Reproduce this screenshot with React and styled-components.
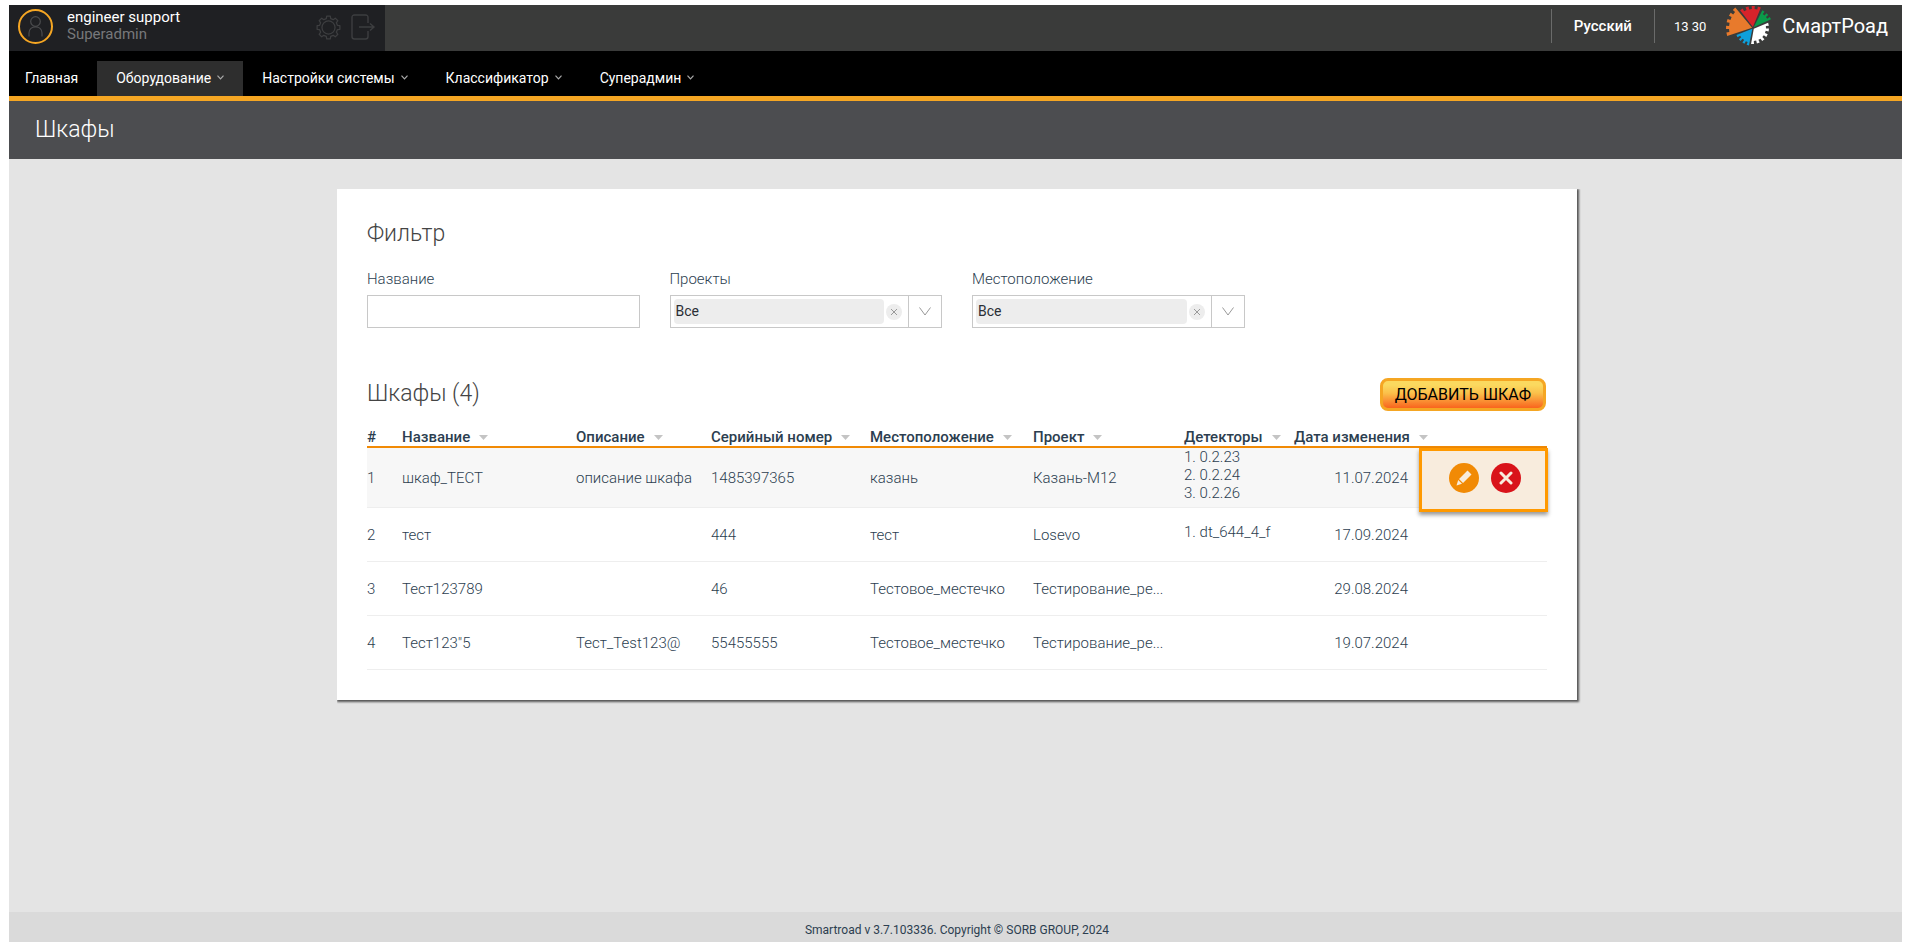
import React, { useState } from 'react';
import styled, { createGlobalStyle, css } from 'styled-components';

const GlobalStyle = createGlobalStyle`
  * {
    box-sizing: border-box;
  }
  body {
    margin: 0;
    background: #fff;
    color: #2c3e50;
    font-family: Roboto, 'Liberation Sans', sans-serif;
    font-size: 15px;
    font-weight: 300;
  }
  button, input, select {
    font-family: inherit;
  }
`;

const Page = styled.div`
  display: flex;
  flex-direction: column;
  min-height: calc(100vh - 11px);
  margin: 5px 9px 6px;
  background: #e4e4e4;
`;

const TopBar = styled.header`
  display: flex;
  justify-content: space-between;
  height: 46px;
  background: #3a3b3a;
`;

const UserPanel = styled.div`
  display: flex;
  align-items: center;
  width: 376px;
  padding: 0 9px 4px 9px;
  background: #1f2023;
`;

const Avatar = styled.span`
  display: flex;
  align-items: flex-end;
  justify-content: center;
  width: 35px;
  height: 35px;
  border: 2px solid #f5a623;
  border-radius: 50%;
  padding-bottom: 5px;
`;

const UserText = styled.div`
  flex: 1;
  margin-left: 14px;
  font-size: 15px;
  font-weight: 400;
  line-height: 17px;
`;

const UserName = styled.div`
  color: #fff;
`;

const UserRole = styled.div`
  color: #77787a;
`;

const IconButton = styled.button`
  display: flex;
  margin: 2px 0 0 10px;
  padding: 0;
  border: 0;
  background: none;
  color: #3d3e40;
  cursor: pointer;
`;

const TopRight = styled.div`
  display: flex;
  align-items: center;
  padding-right: 14px;
  color: #fff;
  font-weight: 400;
`;

const Language = styled.button`
  height: 34px;
  margin-bottom: 4px;
  padding: 0 22px;
  border: 0;
  border-left: 1px solid #6a6b6a;
  border-right: 1px solid #6a6b6a;
  background: none;
  color: #fff;
  font-size: 15px;
  font-weight: 500;
  cursor: pointer;
`;

const Clock = styled.span`
  margin: 0 19px 4px;
  font-size: 13px;
`;

const Brand = styled.a`
  display: flex;
  align-items: center;
  gap: 11px;
  padding-bottom: 4px;
  color: #fff;
  font-size: 20px;
  text-decoration: none;
`;

const Nav = styled.nav`
  display: flex;
  align-items: flex-end;
  height: 50px;
  border-bottom: 5px solid #f5a623;
  background: #000;
`;

const NavLink = styled.a`
  display: flex;
  align-items: center;
  gap: 6px;
  height: 35px;
  padding: 0 19px 2px;
  background: ${(p) => (p.$active ? '#2e2e2e' : 'transparent')};
  color: #fff;
  font-size: 14px;
  font-weight: 400;
  text-decoration: none;

  &:first-child {
    padding-left: 16px;
  }
`;

const TitleBar = styled.div`
  height: 58px;
  padding-left: 26px;
  background: #4c4d50;
`;

const PageTitle = styled.h1`
  margin: 0;
  color: #fff;
  font-size: 23px;
  font-weight: 300;
  line-height: 58px;
`;

const Main = styled.main`
  flex: 1;
  padding: 30px 0 30px 3px;
`;

const Card = styled.section`
  max-width: 1240px;
  margin: 0 auto;
  padding: 30px;
  background: #fff;
  box-shadow: 1px 1px 2px 1px #555;
  clip-path: inset(0 -4px -4px 0);
`;

const Heading = styled.h2`
  margin: 0;
  color: #444;
  font-size: 23px;
  font-weight: 300;
  line-height: 30px;
`;

const Filters = styled.form`
  display: grid;
  grid-template-columns: repeat(4, 1fr);
  gap: 30px;
  margin: 20px 0 48px;
`;

const Field = styled.div`
  display: flex;
  flex-direction: column;
`;

const Label = styled.label`
  margin-bottom: 6px;
  line-height: 20px;
`;

const boxed = css`
  height: 33px;
  border: 1px solid #c8c8c8;
  background: #fff;
`;

const TextInput = styled.input`
  ${boxed}
  padding: 0 8px;
  font-size: 14px;
`;

const SelectBox = styled.div`
  ${boxed}
  display: flex;
  align-items: center;
  padding-left: 3px;
`;

const Select = styled.select`
  appearance: none;
  flex: 1;
  min-width: 0;
  height: 25px;
  padding: 0 2px 2px;
  border: 0;
  border-radius: 4px;
  background: #ededed;
  color: #2b2f36;
  font-size: 14px;
  font-weight: 400;
`;

const ClearButton = styled.button`
  display: flex;
  align-items: center;
  justify-content: center;
  width: 16px;
  height: 16px;
  margin: 0 6px 0 2px;
  padding: 0;
  border: 0;
  border-radius: 50%;
  background: #ededed;
  cursor: pointer;
`;

const OpenButton = styled.button`
  display: flex;
  align-items: center;
  justify-content: center;
  align-self: stretch;
  width: 33px;
  padding: 0;
  border: 0;
  border-left: 1px solid #c8c8c8;
  background: #fff;
`;

const ListHead = styled.div`
  display: flex;
  align-items: center;
  justify-content: space-between;
  height: 36px;
  padding-right: 1px;
`;

const AddButton = styled.button`
  height: 33px;
  padding: 0 12px;
  border: 3px solid #f5a623;
  border-radius: 8px;
  background: linear-gradient(#fbd95f 15%, #fbc04a 45%, #f9641e);
  color: #000;
  font-size: 16px;
  font-weight: 400;
  text-transform: uppercase;
  cursor: pointer;
`;

const Table = styled.table`
  width: 100%;
  margin-top: 15px;
  border-collapse: separate;
  border-spacing: 0;
  table-layout: fixed;
`;

const Th = styled.th`
  height: 21px;
  width: ${(p) => p.$width};
  padding: 0;
  border-bottom: 2px solid #f18a05;
  font-size: 15px;
  font-weight: 500;
  line-height: 18px;
  text-align: left;
  white-space: nowrap;
`;

const SortIcon = styled.svg`
  margin-left: 9px;
  vertical-align: 2px;
`;

const Tr = styled.tr`
  background: ${(p) => (p.$active ? '#f7f7f7' : '#fff')};
`;

const Td = styled.td`
  position: relative;
  height: 54px;
  padding: 0 12px 0 0;
  border-bottom: 1px solid #eee;
  line-height: 18px;
  overflow: ${(p) => (p.$cut ? 'hidden' : 'visible')};
  text-overflow: ellipsis;
  text-align: ${(p) => (p.$right ? 'right' : 'left')};
  white-space: nowrap;
`;

const Detectors = styled.div`
  padding-bottom: 5px;
`;

const Highlight = styled.div`
  position: absolute;
  top: 0;
  right: -1px;
  bottom: -5px;
  left: -1px;
  z-index: 1;
  display: flex;
  align-items: center;
  justify-content: center;
  gap: 12px;
  padding: 0 0 4px 3px;
  border: 3px solid #ff9900;
  background: #f8ecdd;
  box-shadow: 0 3px 4px rgba(0, 0, 0, 0.4);
`;

const RoundButton = styled.button`
  display: flex;
  align-items: center;
  justify-content: center;
  width: 30px;
  height: 30px;
  padding: 0;
  border: 0;
  border-radius: 50%;
  background: ${(p) => p.$color};
  cursor: pointer;
`;

const Footer = styled.footer`
  height: 30px;
  padding: 3px 0 0 3px;
  background: #dadada;
  font-size: 12px;
  font-weight: 400;
  line-height: 30px;
  text-align: center;
`;

const menu = [
  { title: 'Главная' },
  { title: 'Оборудование', sub: true, active: true },
  { title: 'Настройки системы', sub: true },
  { title: 'Классификатор', sub: true },
  { title: 'Суперадмин', sub: true },
];

const columns = [
  { title: '#', width: '35px' },
  { title: 'Название', width: '174px', sort: true },
  { title: 'Описание', width: '135px', sort: true },
  { title: 'Серийный номер', width: '159px', sort: true },
  { title: 'Местоположение', width: '163px', sort: true },
  { title: 'Проект', width: '151px', sort: true },
  { title: 'Детекторы', width: '110px', sort: true },
  { title: 'Дата изменения', width: '126px', sort: true },
  { title: '', width: 'auto' },
];

const cabinets = [
  { name: 'шкаф_ТЕСТ', about: 'описание шкафа', serial: '1485397365', place: 'казань', project: 'Казань-М12', detectors: ['0.2.23', '0.2.24', '0.2.26'], date: '11.07.2024', active: true },
  { name: 'тест', about: '', serial: '444', place: 'тест', project: 'Losevo', detectors: ['dt_644_4_f'], date: '17.09.2024' },
  { name: 'Тест123789', about: '', serial: '46', place: 'Тестовое_местечко', project: 'Тестирование_ре...', detectors: [], date: '29.08.2024' },
  { name: 'Тест123"5', about: 'Тест_Test123@', serial: '55455555', place: 'Тестовое_местечко', project: 'Тестирование_ре...', detectors: [], date: '19.07.2024' },
];

// sector of a gear, angles in degrees clockwise from the right
function sector(radius, from, to, teeth) {
  const at = (r, deg) => {
    const a = (deg * Math.PI) / 180;
    return `${(28 + r * Math.cos(a)).toFixed(2)} ${(24 + r * Math.sin(a)).toFixed(2)}`;
  };
  const step = (to - from) / (teeth * 2 - 1);
  const points = [at(1, (from + to) / 2)];
  for (let i = 0; i < teeth * 2 - 1; i++) {
    const r = i % 2 ? radius - 3 : radius;
    points.push(at(r, from + step * i), at(r, from + step * (i + 1)));
  }
  return `M${points.join('L')}Z`;
}

function Logo() {
  return (
    <svg width="46" height="42" viewBox="0 1 46 42" aria-hidden="true">
      <path d={sector(27, 163, 229, 5)} fill="#e87a2c" />
      <path d={sector(22, 234, 291, 4)} fill="#d8232a" />
      <path d={sector(20, 298, 334, 3)} fill="#0a9b4a" />
      <path d={sector(16, 341, 457, 6)} fill="#fff" />
      <path d={sector(18, 103, 157, 4)} fill="#0ea0dc" />
    </svg>
  );
}

function GearIcon() {
  const teeth = [];
  for (let i = 0; i < 8; i++) {
    const p = (r, d) => {
      const a = ((i * 45 + d) * Math.PI) / 180;
      return `${(13 + r * Math.cos(a)).toFixed(2)} ${(13 + r * Math.sin(a)).toFixed(2)}`;
    };
    teeth.push(`${p(9.5, -14)}L${p(12, -9)}L${p(12, 9)}L${p(9.5, 14)}`);
  }
  return (
    <svg width="25" height="25" viewBox="0 0 26 26" fill="none" stroke="currentColor" strokeWidth="1.3" strokeLinejoin="round">
      <path d={`M${teeth.join('L')}Z`} />
      <circle cx="13" cy="13" r="6.8" />
    </svg>
  );
}

function SelectField({ id, label }) {
  return (
    <Field>
      <Label htmlFor={id}>{label}</Label>
      <SelectBox>
        <Select id={id}>
          <option>Все</option>
        </Select>
        <ClearButton type="button" aria-label="Очистить">
          <svg width="6" height="6" viewBox="0 0 6 6" stroke="#999" strokeWidth="1">
            <path d="M0 0L6 6M6 0L0 6" />
          </svg>
        </ClearButton>
        <OpenButton type="button" aria-label="Открыть">
          <svg width="12" height="9" viewBox="0 0 12 9" fill="none" stroke="#999">
            <path d="M0.5 0.5L6 8L11.5 0.5" />
          </svg>
        </OpenButton>
      </SelectBox>
    </Field>
  );
}

export default function App() {
  const [name, setName] = useState('');

  return (
    <>
      <GlobalStyle />
      <Page>
        <TopBar>
          <UserPanel>
            <Avatar>
              <svg width="15" height="21" viewBox="0 0 15 21" fill="none" stroke="#4b4c4e" strokeWidth="1.2">
                <circle cx="7.5" cy="5.5" r="4.8" />
                <path d="M1 20.5V17C1 13 4 10.8 7.5 10.8S14 13 14 17V20.5" />
              </svg>
            </Avatar>
            <UserText>
              <UserName>engineer support</UserName>
              <UserRole>Superadmin</UserRole>
            </UserText>
            <IconButton aria-label="Настройки">
              <GearIcon />
            </IconButton>
            <IconButton aria-label="Выход">
              <svg width="25" height="26" viewBox="0 0 25 26" fill="none" stroke="currentColor" strokeWidth="1.4">
                <path d="M17 9V3.5Q17 1 14.5 1H3.5Q1 1 1 3.5V22.5Q1 25 3.5 25H14.5Q17 25 17 22.5V17" />
                <path d="M8 13H23M19 9.5L23 13L19 16.5" />
              </svg>
            </IconButton>
          </UserPanel>
          <TopRight>
            <Language>Русский</Language>
            <Clock>13 30</Clock>
            <Brand href="#">
              <Logo />
              СмартРоад
            </Brand>
          </TopRight>
        </TopBar>

        <Nav>
          {menu.map((item) => (
            <NavLink key={item.title} href="#" $active={item.active}>
              {item.title}
              {item.sub && (
                <svg width="7" height="5" viewBox="0 0 7 5" fill="none" stroke="#aaa" strokeWidth="1.2">
                  <path d="M0.5 0.7L3.5 3.8L6.5 0.7" />
                </svg>
              )}
            </NavLink>
          ))}
        </Nav>

        <TitleBar>
          <PageTitle>Шкафы</PageTitle>
        </TitleBar>

        <Main>
          <Card>
            <Heading>Фильтр</Heading>
            <Filters>
              <Field>
                <Label htmlFor="name">Название</Label>
                <TextInput id="name" value={name} onChange={(e) => setName(e.target.value)} />
              </Field>
              <SelectField id="projects" label="Проекты" />
              <SelectField id="place" label="Местоположение" />
            </Filters>

            <ListHead>
              <Heading>Шкафы (4)</Heading>
              <AddButton>Добавить шкаф</AddButton>
            </ListHead>
            <Table>
              <thead>
                <tr>
                  {columns.map((col) => (
                    <Th key={col.title} $width={col.width}>
                      {col.title}
                      {col.sort && (
                        <SortIcon width="9" height="5" viewBox="0 0 9 5">
                          <path d="M0 0H9L4.5 5Z" fill="#c4c4c4" />
                        </SortIcon>
                      )}
                    </Th>
                  ))}
                </tr>
              </thead>
              <tbody>
                {cabinets.map((row, i) => (
                  <Tr key={row.serial} $active={row.active}>
                    <Td>{i + 1}</Td>
                    <Td $cut>{row.name}</Td>
                    <Td>{row.about}</Td>
                    <Td>{row.serial}</Td>
                    <Td>{row.place}</Td>
                    <Td>{row.project}</Td>
                    <Td>
                      <Detectors>
                        {row.detectors.map((d, n) => (
                          <div key={d}>{n + 1}. {d}</div>
                        ))}
                      </Detectors>
                    </Td>
                    <Td $right>{row.date}</Td>
                    <Td>
                      {row.active && (
                        <Highlight>
                          <RoundButton $color="#f18a05" aria-label="Изменить">
                            <svg width="18" height="18" viewBox="0 0 18 18" fill="#f8ecdd">
                              <path d="M12.5 1.5L16.5 5.5L8 14L4 10ZM3.2 11L7 14.8L1.5 16.5Z" />
                            </svg>
                          </RoundButton>
                          <RoundButton $color="#d9131a" aria-label="Удалить">
                            <svg width="14" height="14" viewBox="0 0 14 14" stroke="#f8ecdd" strokeWidth="3" strokeLinecap="round">
                              <path d="M2 2L12 12M12 2L2 12" />
                            </svg>
                          </RoundButton>
                        </Highlight>
                      )}
                    </Td>
                  </Tr>
                ))}
              </tbody>
            </Table>
          </Card>
        </Main>

        <Footer>Smartroad v 3.7.103336. Copyright © SORB GROUP, 2024</Footer>
      </Page>
    </>
  );
}
